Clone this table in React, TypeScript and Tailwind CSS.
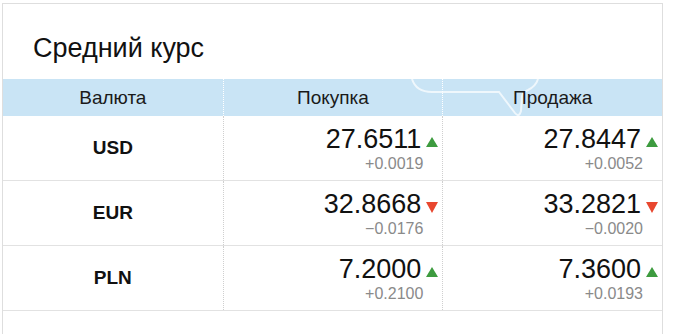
import React from "react";

type Row = {
  code: string;
  buy: string;
  buyDelta: string;
  buyUp: boolean;
  sell: string;
  sellDelta: string;
  sellUp: boolean;
};

const rows: Row[] = [
  { code: "USD", buy: "27.6511", buyDelta: "+0.0019", buyUp: true, sell: "27.8447", sellDelta: "+0.0052", sellUp: true },
  { code: "EUR", buy: "32.8668", buyDelta: "\u22120.0176", buyUp: false, sell: "33.2821", sellDelta: "\u22120.0020", sellUp: false },
  { code: "PLN", buy: "7.2000", buyDelta: "+0.2100", buyUp: true, sell: "7.3600", sellDelta: "+0.0193", sellUp: true },
];

function Tri({ up }: { up: boolean }) {
  return up ? (
    <svg width="12" height="10" viewBox="0 0 12 10" className="ml-[5px] mb-[7px] shrink-0">
      <polygon points="6,0 12,10 0,10" fill="#3d9b3f" />
    </svg>
  ) : (
    <svg width="12" height="11" viewBox="0 0 12 11" className="ml-[5px] mb-[6px] shrink-0">
      <polygon points="0,0 12,0 6,11" fill="#e8472f" />
    </svg>
  );
}

function Cell({ value, delta, up }: { value: string; delta: string; up: boolean }) {
  return (
    <div className="flex flex-col items-end pr-[4px] pt-[8px] pb-[6px] border-l border-dotted border-[#cfcfcf]">
      <div className="flex items-end h-[30px]">
        <span className="text-[27px] leading-[30px] text-[#111]">{value}</span>
        <Tri up={up} />
      </div>
      <span className="text-[16px] leading-[20px] text-[#8a8a8a] mr-[15px]">{delta}</span>
    </div>
  );
}

export default function App() {
  return (
    <div className="w-[681px] h-[334px] overflow-hidden bg-white pt-[3px] pl-[2px]" style={{ fontFamily: '"Liberation Sans", Arial, sans-serif' }}>
      <div className="w-[661px] h-[360px] border border-[#dedede] bg-white">
        <div className="pl-[30px] pt-[29px] mb-[16px] text-[27px] leading-[30px] text-[#111]">Средний курс</div>
        <div className="relative grid grid-cols-3 h-[37px] bg-[#c9e4f5] text-[19px] leading-[37px] text-[#1a1a1a]">
          <svg className="absolute left-0 top-0" width="659" height="37" viewBox="0 0 659 37">
            <path
              d="M409 0 Q413 13 429 13 L496 13 L512 34 Q516 39 518 32 L519 17 Q520 13 525 11 Q533 7 535 0"
              fill="none"
              stroke="#ffffff"
              strokeWidth="2"
              strokeOpacity="0.7"
            />
          </svg>
          <div className="relative text-center">Валюта</div>
          <div className="relative text-center border-l border-dotted border-white">Покупка</div>
          <div className="relative text-center border-l border-dotted border-white">Продажа</div>
        </div>
        {rows.map((r) => (
          <div key={r.code} className="grid grid-cols-3 border-b border-[#e2e2e2]">
            <div className="flex items-center justify-center text-[19px] font-bold text-[#111]">{r.code}</div>
            <Cell value={r.buy} delta={r.buyDelta} up={r.buyUp} />
            <Cell value={r.sell} delta={r.sellDelta} up={r.sellUp} />
          </div>
        ))}
        <div className="h-[40px]" />
      </div>
    </div>
  );
}
